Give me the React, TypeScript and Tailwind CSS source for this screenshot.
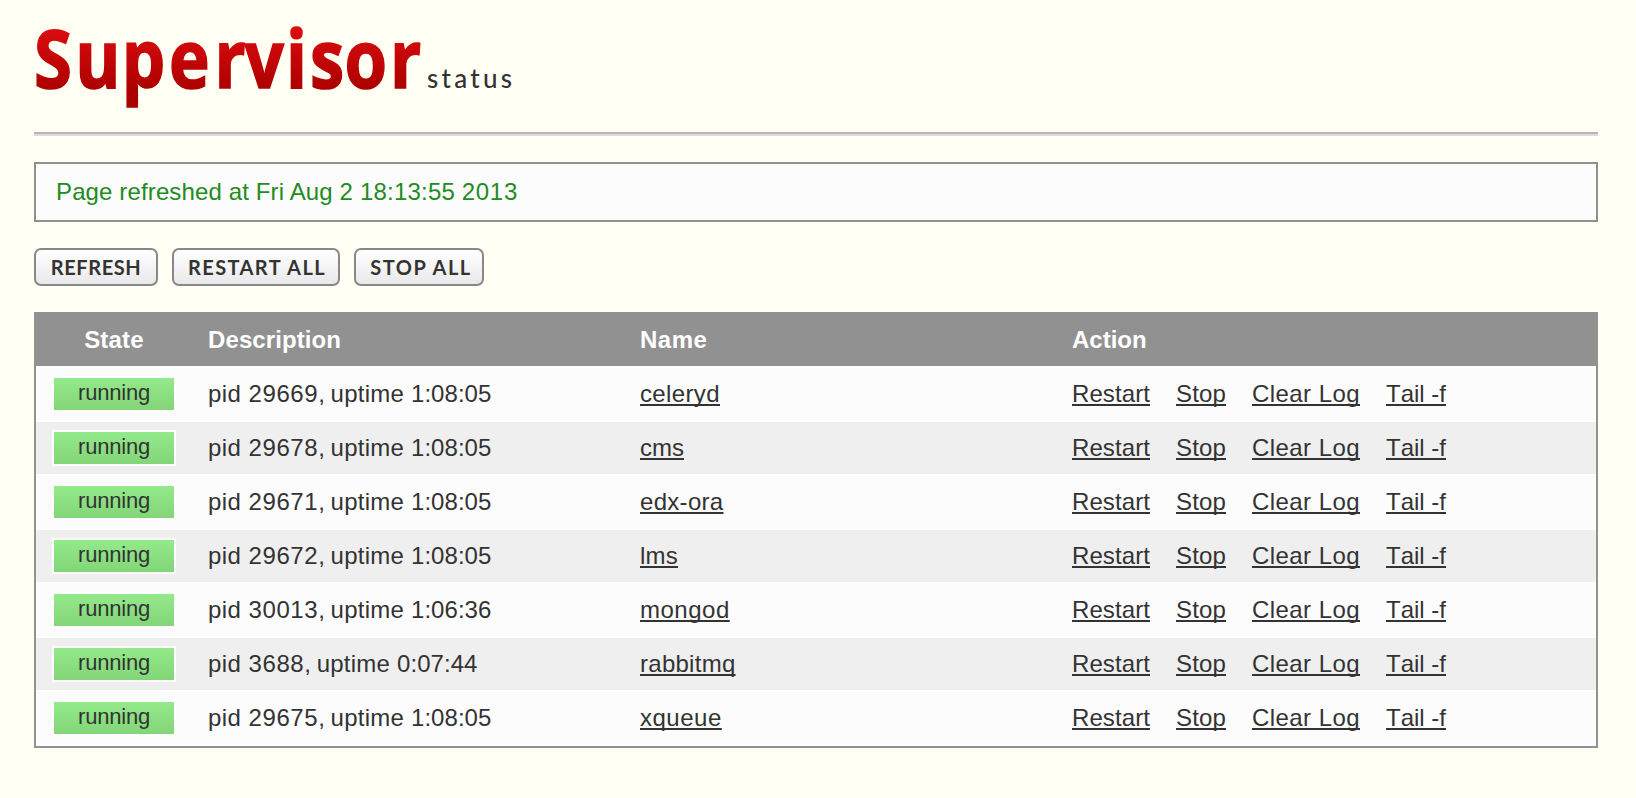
import React from "react";

type Process = { pid: string; uptime: string; name: string; tracking: string };

const processes: Process[] = [
  { pid: "29669", uptime: "1:08:05", name: "celeryd", tracking: "tracking-[0.37px]" },
  { pid: "29678", uptime: "1:08:05", name: "cms", tracking: "tracking-normal" },
  { pid: "29671", uptime: "1:08:05", name: "edx-ora", tracking: "tracking-[0.3px]" },
  { pid: "29672", uptime: "1:08:05", name: "lms", tracking: "tracking-[0.2px]" },
  { pid: "30013", uptime: "1:06:36", name: "mongod", tracking: "tracking-[0.5px]" },
  { pid: "3688", uptime: "0:07:44", name: "rabbitmq", tracking: "tracking-[0.27px]" },
  { pid: "29675", uptime: "1:08:05", name: "xqueue", tracking: "tracking-[0.5px]" },
];

const columns = "grid grid-cols-[156px_432px_432px_1fr]";
const link =
  "underline decoration-2 underline-offset-2 [text-decoration-skip-ink:none] [font-kerning:none]";

function Logo() {
  return (
    <svg width="490" height="110" viewBox="0 0 490 110" className="block overflow-visible">
      <defs>
        <linearGradient id="red" gradientUnits="userSpaceOnUse" x1="0" y1="-60" x2="0" y2="10">
          <stop offset="0" stopColor="#dc0c0f" />
          <stop offset="0.85" stopColor="#ae0000" />
          <stop offset="1" stopColor="#aa0000" />
        </linearGradient>
      </defs>
      <text
        transform="translate(0 73.5) scale(0.86 1)"
        x="0 48 102 157 210 245 293 321 361 414"
        y="0"
        fill="url(#red)"
        stroke="url(#red)"
        strokeWidth="1.6"
        fontFamily="'Open Sans', 'Noto Sans', sans-serif"
        fontWeight="700"
        fontSize="80"
      >
        Supervisor
      </text>
      <text x="393" y="74" textLength="85" fill="#333333" fontFamily="Lato, sans-serif" fontWeight="500" fontSize="26">
        status
      </text>
    </svg>
  );
}

function ImageButton({ label, className }: { label: string; className: string }) {
  return (
    <button
      className={
        "flex h-[38px] items-center justify-center whitespace-nowrap rounded-[7px] border-2 border-[#88888a] bg-linear-to-b from-white to-[#e9e9e9] font-[Lato,sans-serif] text-[20px] font-bold leading-none text-[#333333] " +
        className
      }
    >
      {label}
    </button>
  );
}

function Row({ process, shaded }: { process: Process; shaded: boolean }) {
  return (
    <div
      className={
        columns +
        " h-[54px] items-center border-t-2 border-white " +
        (shaded ? "bg-[#efefef]" : "bg-[#fcfcfc]")
      }
    >
      <div className="px-4">
        <div className="h-9 border-2 border-white bg-linear-to-b from-[#94e98a] to-[#82d677] text-center text-[22px] leading-[29px] tracking-[-0.2px]">
          running
        </div>
      </div>
      <div className="whitespace-pre px-4">
        <span className="tracking-[0.45px]">pid </span>
        <span className="tracking-[0.6px]">{process.pid}</span>
        <span className="tracking-[-0.5px]">, </span>
        <span className="tracking-[0.24px]">uptime </span>
        <span className="tracking-[0.05px]">{process.uptime}</span>
      </div>
      <div className="px-4">
        <a href="#" className={link + " " + process.tracking}>{process.name}</a>
      </div>
      <div className="flex gap-[26px] px-4">
        <a href="#" className={link + " tracking-[0.09px]"}>Restart</a>
        <a href="#" className={link + " tracking-[0.15px]"}>Stop</a>
        <a href="#" className={link + " tracking-[0.44px]"}>Clear Log</a>
        <a href="#" className={link}>Tail -f</a>
      </div>
    </div>
  );
}

export default function App() {
  return (
    <div className="h-[798px] overflow-hidden bg-[#fffff3] pl-[34px] pr-[38px] pt-[14px] font-['Liberation_Sans',Arial,sans-serif] text-[24px] leading-[28px] text-[#333333]">
      <header className="h-[122px] border-b-2 border-[#dcdcdc]">
        <div className="h-[120px] border-b-2 border-[#b6b6b6]">
          <Logo />
        </div>
      </header>
      <div className="mt-[26px] flex h-[60px] items-center whitespace-pre border-2 border-[#919191] bg-[#fcfcfc] px-5 text-[#228b22]">
        <span className="tracking-[0.13px]">Page refreshed at Fri Aug </span>
        <span className="tracking-[0.2px]">2 18:13:55 </span>
        <span className="tracking-[0.66px]">2013</span>
      </div>
      <div className="mt-[26px] flex gap-[14px]">
        <ImageButton label="REFRESH" className="w-[124px] tracking-[0.6px]" />
        <ImageButton label="RESTART ALL" className="w-[168px] tracking-[1.4px] pl-0.5" />
        <ImageButton label="STOP ALL" className="w-[130px] tracking-[1.5px] pl-1" />
      </div>
      <div className="mt-[26px] border-x-2 border-b-2 border-[#919191]">
        <div className={columns + " h-[54px] items-center bg-[#919191] pt-px font-bold text-white"}>
          <div className="text-center tracking-[0.2px]">State</div>
          <div className="px-4 tracking-[0.1px]">Description</div>
          <div className="px-4 tracking-[0.5px]">Name</div>
          <div className="px-4">Action</div>
        </div>
        <div className="border-b-2 border-white">
          {processes.map((process, index) => (
            <Row key={process.name} process={process} shaded={index % 2 === 1} />
          ))}
        </div>
      </div>
    </div>
  );
}
